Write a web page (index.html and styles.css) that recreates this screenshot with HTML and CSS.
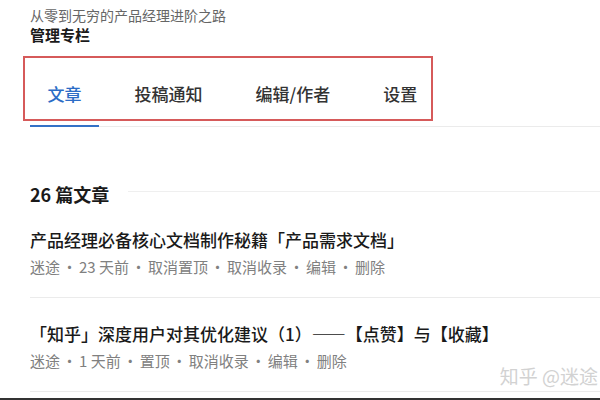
FILE: index.html
```
<!DOCTYPE html>
<html lang="zh-CN">

<head>
<meta charset="utf-8"/>
<title>管理专栏</title>

<link rel="stylesheet" href="styles.css">
</head>

<body>
<div class="page">

<header class="column-head">
<p class="column-sub">从零到无穷的产品经理进阶之路</p>
<h1 class="column-title">管理专栏</h1>
</header>

<nav class="tabs">
<a class="tab active" href="#">文章</a>
<a class="tab" href="#">投稿通知</a>
<a class="tab" href="#">编辑/作者</a>
<a class="tab" href="#">设置</a>
<div class="mark"></div>
</nav>

<h2 class="count">26 篇文章</h2>

<ul class="articles">
<li class="article">
<p class="article-title">产品经理必备核心文档制作秘籍「产品需求文档」</p>
<p class="meta"><span>迷途</span><span>23 天前</span><span>取消置顶</span><span>取消收录</span><span>编辑</span><span>删除</span></p>
</li>
<li class="article">
<p class="article-title">「知乎」深度用户对其优化建议（1）——【点赞】与【收藏】</p>
<p class="meta"><span>迷途</span><span>1 天前</span><span>置顶</span><span>取消收录</span><span>编辑</span><span>删除</span></p>
</li>
</ul>

<div class="edge"></div>

<p class="watermark">知乎 @迷途</p>
</div>
</body>
</html>
```

FILE: styles.css
```
html {
	overflow: hidden;
}
body {
	margin: 0;
	font-family: "Noto Sans CJK SC", "Noto Sans", sans-serif;
	color: #1a1a1a;
	background: #fff;
}
p, h1, h2, ul {
	margin: 0;
	padding: 0;
}
.page {
	position: relative;
	padding-left: 30px;
	height: 400px;
	box-sizing: border-box;
}
.column-head {
	padding-top: 5px;
}
.column-sub {
	font-size: 14px;
	line-height: 20px;
	color: #666;
}
.column-title {
	font-size: 15px;
	line-height: 20px;
	font-weight: bold;
	color: #1a1a1a;
}
.tabs {
	position: relative;
	display: flex;
	gap: 18px;
	border-bottom: 1px solid #ebebeb;
}
.tab {
	padding: 37px 17.5px 19px;
	margin-bottom: -1px;
	font-size: 17px;
	font-weight: 500;
	line-height: 24px;
	color: #333;
	text-decoration: none;
	border-bottom: 2px solid transparent;
}
.tab.active {
	color: #2c6cc6;
	border-bottom-color: #3471c6;
}
/* red annotation box drawn over the tab row */
.mark {
	position: absolute;
	left: -7px;
	top: 11px;
	width: 410px;
	height: 65px;
	box-sizing: border-box;
	border: 2px solid #d65a5a;
}
.count {
	display: flex;
	align-items: center;
	margin-top: 57px;
	font-size: 18px;
	line-height: 20px;
	font-weight: bold;
	color: #1a1a1a;
}
.count::after {
	content: "";
	flex: 1;
	height: 1px;
	margin: 0 0 5px 19px;
	background: #efefef;
}
.articles {
	list-style: none;
}
.article {
	padding: 24px 0 19px;
	border-bottom: 1px solid #ebebeb;
}
.article-title {
	font-size: 17px;
	font-weight: 500;
	line-height: 24px;
	color: #1a1a1a;
}
.meta {
	margin-top: 4px;
	font-size: 15px;
	line-height: 22px;
	color: #808080;
}
.meta span + span::before {
	content: "·";
	display: inline-block;
	width: 19px;
	text-align: center;
}
.edge {
	margin: 6px 0 0 -30px;
	height: 2px;
	background: #333;
}
.watermark {
	position: absolute;
	right: 2px;
	top: 364px;
	font-size: 19px;
	line-height: 24px;
	color: #d2d2d2;
	text-shadow: 0 0 1px #fff;
}
```
